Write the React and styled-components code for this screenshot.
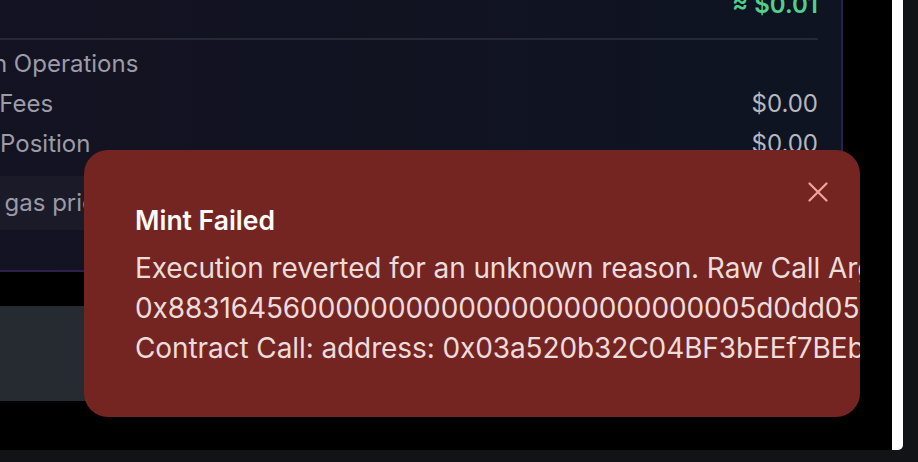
import React from 'react'
import styled, { createGlobalStyle } from 'styled-components'

const GlobalStyle = createGlobalStyle`
  html, body {
    margin: 0;
    padding: 0;
    background: #121317;
    font-family: Inter, 'Noto Sans', sans-serif;
    overflow: hidden;
  }
`

const Frame = styled.div`
  width: 903px;
  height: 450px;
  box-sizing: border-box;
  padding-right: 11px;
  background: #ffffff;
  border-bottom-right-radius: 5px;
`

const Viewport = styled.main`
  position: relative;
  width: 892px;
  height: 450px;
  background: #000000;
  overflow: hidden;
`

const Scroller = styled.div`
  display: flex;
  flex-direction: column;
  gap: 34px;
  margin-top: -38px;
  margin-left: -130px;
  width: 973px;
`

const SummaryCard = styled.section`
  box-sizing: border-box;
  padding: 21px 23px 40px 24px;
  border: 2px solid #2d1f4d;
  border-radius: 16px;
  background: linear-gradient(90deg, #141222 0%, #111321 55%, #0e1422 100%);
`

const TotalRow = styled.div`
  display: flex;
  justify-content: flex-end;
  padding-bottom: 13px;
  border-bottom: 2px solid #262836;
  margin-bottom: 4px;
`

const Total = styled.span`
  font-size: 24px;
  line-height: 40px;
  font-weight: 600;
  color: #4fd08d;
`

const Row = styled.div`
  display: flex;
  justify-content: space-between;
  align-items: center;
  height: 40px;
  font-size: 24px;
  line-height: 40px;
  color: #9c9ca7;
  white-space: nowrap;
`

const Value = styled.span`
  color: #b7b7bf;
`

const GasNote = styled.div`
  margin-top: 12px;
  height: 54px;
  padding: 0 16px;
  border-radius: 10px;
  background: #1b1a28;
  font-size: 24px;
  line-height: 54px;
  color: #9a9aa6;
  white-space: nowrap;
`

const MintButton = styled.button`
  height: 95px;
  border: none;
  border-radius: 14px;
  background: #262a31;
  color: #d4d4d8;
  font-family: inherit;
  font-size: 26px;
  font-weight: 600;
`

const Toast = styled.div`
  position: absolute;
  left: 84px;
  top: 150px;
  width: 776px;
  height: 267px;
  box-sizing: border-box;
  padding: 50px 0 0 51px;
  border-radius: 24px;
  background: #752521;
  overflow: hidden;
`

const ToastTitle = styled.h3`
  margin: 0;
  font-size: 26.5px;
  line-height: 40px;
  font-weight: 600;
  color: #fafafa;
`

const ToastBody = styled.div`
  margin-top: 8px;
  font-size: 28px;
  line-height: 40px;
  letter-spacing: -0.1px;
  color: #ecdcdc;
  white-space: nowrap;
`

const CloseButton = styled.button`
  position: absolute;
  top: 32px;
  right: 32px;
  width: 20px;
  height: 20px;
  padding: 0;
  border: none;
  background: none;
  display: flex;
`

const CloseIcon = () => (
  <svg width="20" height="20" viewBox="0 0 20 20" fill="none">
    <path d="M1.5 1.5 L18.5 18.5 M18.5 1.5 L1.5 18.5" stroke="#f2a39e" strokeWidth="2.2" strokeLinecap="round" />
  </svg>
)

const rows = [
  { label: 'Execution Operations' },
  { label: 'Network Fees', value: '$0.00' },
  { label: 'Increase Position', value: '$0.00' },
]

const errorLines = [
  'Execution reverted for an unknown reason. Raw Call Arguments:',
  '0x8831645600000000000000000000000005d0dd05a1b2c3d4e5f60718293a4b5c6d7e8f9',
  'Contract Call: address: 0x03a520b32C04BF3bEEf7BEb72E919cf822Ed34f1',
]

const App = () => {
  return (
    <>
      <GlobalStyle />
      <Frame>
        <Viewport>
          <Scroller>
            <SummaryCard>
              <TotalRow>
                <Total>≈ $0.01</Total>
              </TotalRow>
              {rows.map((r) => (
                <Row key={r.label}>
                  <span>{r.label}</span>
                  {r.value && <Value>{r.value}</Value>}
                </Row>
              ))}
              <GasNote>Current gas price: 0.012 gwei</GasNote>
            </SummaryCard>
            <MintButton>Mint Position</MintButton>
          </Scroller>

          <Toast role="alert">
            <CloseButton aria-label="Close">
              <CloseIcon />
            </CloseButton>
            <ToastTitle>Mint Failed</ToastTitle>
            <ToastBody>
              {errorLines.map((l) => (
                <div key={l}>{l}</div>
              ))}
            </ToastBody>
          </Toast>
        </Viewport>
      </Frame>
    </>
  )
}

export default App
